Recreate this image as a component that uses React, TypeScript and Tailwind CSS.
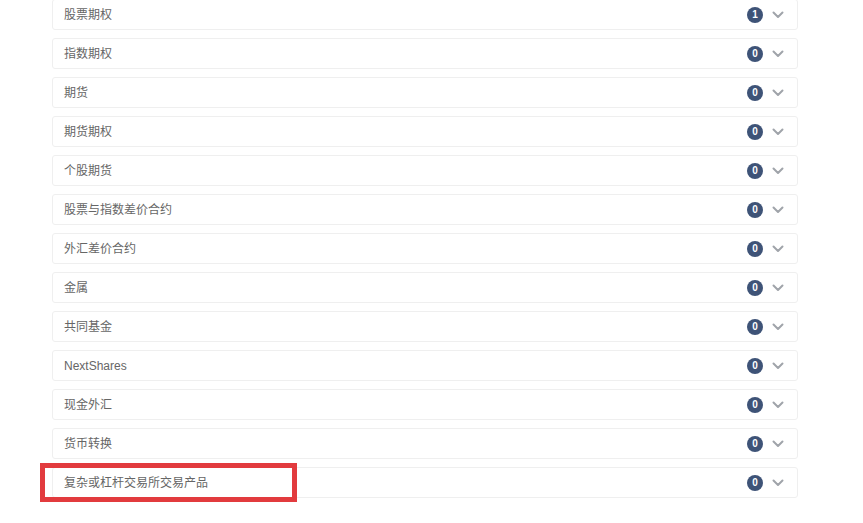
import React from "react";

interface Item {
  label: string;
  count: number;
  marked?: boolean;
}

const items: Item[] = [
  { label: "股票期权", count: 1 },
  { label: "指数期权", count: 0 },
  { label: "期货", count: 0 },
  { label: "期货期权", count: 0 },
  { label: "个股期货", count: 0 },
  { label: "股票与指数差价合约", count: 0 },
  { label: "外汇差价合约", count: 0 },
  { label: "金属", count: 0 },
  { label: "共同基金", count: 0 },
  { label: "NextShares", count: 0 },
  { label: "现金外汇", count: 0 },
  { label: "货币转换", count: 0 },
  { label: "复杂或杠杆交易所交易产品", count: 0, marked: true },
];

function Chevron() {
  return (
    <svg width="12" height="8" viewBox="0 0 12 8" fill="none">
      <path d="M1.5 1.5L6 6l4.5-4.5" stroke="#a0a4aa" strokeWidth="2" strokeLinecap="round" strokeLinejoin="round" />
    </svg>
  );
}

export default function App() {
  return (
    <div
      className="w-[863px] h-[523px] bg-white overflow-hidden"
      style={{ fontFamily: '"Liberation Sans", "Noto Sans CJK SC", sans-serif' }}
    >
      <div className="ml-[52px] w-[746px] -mt-px flex flex-col gap-[8px]">
        {items.map((item) => (
          <div key={item.label} className="relative">
            <div className="h-[31px] border border-[#efefef] rounded-[3px] flex items-center pl-[11px] pr-[13px]">
              <span className="flex-1 text-[12px] text-[#666]">{item.label}</span>
              <span className="w-[16px] h-[16px] rounded-full bg-[#3e5377] text-white text-[10px] font-bold flex items-center justify-center leading-none">
                {item.count}
              </span>
              <span className="ml-[9px] flex items-center">
                <Chevron />
              </span>
            </div>
            {item.marked && (
              <div className="absolute left-[-12px] top-[-4px] w-[257px] h-[39px] border-[5px] border-[#e23b3e]" />
            )}
          </div>
        ))}
      </div>
    </div>
  );
}
